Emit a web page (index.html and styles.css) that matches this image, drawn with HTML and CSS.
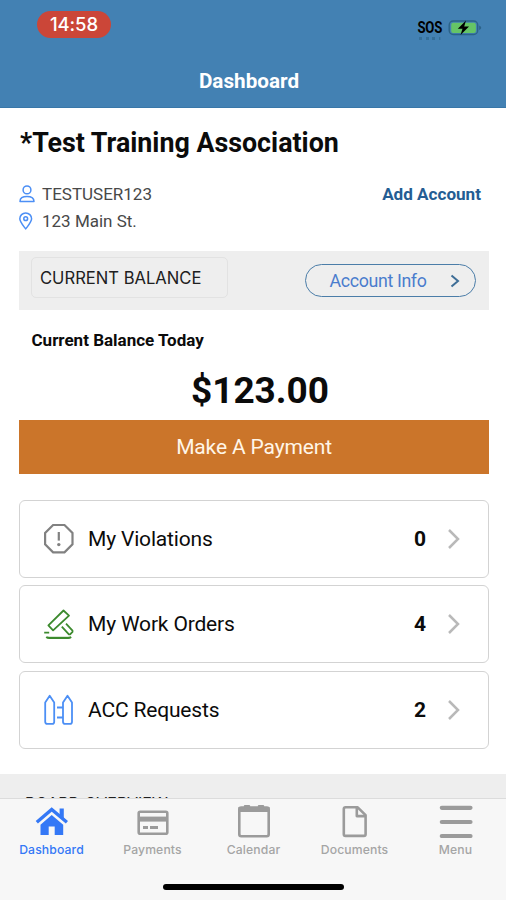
FILE: index.html
```html
<!DOCTYPE html>
<html lang="en">
<head>
<meta charset="utf-8">
<title>Dashboard</title>
<link rel="stylesheet" href="styles.css">
</head>
<body>
<div class="app">
  <header class="header">
    <div class="status">
      <span class="time">14:58</span>
      <div class="signals">
        <div class="sos"><span>SOS</span><i class="dots"></i></div>
        <svg class="battery" width="34" height="18" viewBox="0 0 34 18">
          <rect x="1.2" y="2" width="28.5" height="13.5" rx="4" fill="none" stroke="#2b6288" stroke-width="1.4"/>
          <rect x="3.2" y="3.7" width="24.7" height="10.2" rx="2" fill="#65c466"/>
          <path d="M31.2 6.5q2 .8 2 2.3t-2 2.3z" fill="#2b6288"/>
          <path d="M18 1.5 9.8 9.7h4.7l-2 6.3 8.5-8.4h-4.8z" fill="#000"/>
        </svg>
      </div>
    </div>
    <h1 class="screen-title">Dashboard</h1>
  </header>

  <main class="content">
    <h2 class="association">*Test Training Association</h2>
    <div class="account">
      <div class="details">
        <div class="detail">
          <svg width="16" height="18" viewBox="0 0 16 18" fill="none" stroke="#4c8ff5" stroke-width="1.5"><circle cx="8" cy="4.9" r="3.9"/><path d="M1 16.4c0-3.3 2.4-5 7-5s7 1.7 7 5z" stroke-linejoin="round"/></svg>
          <span class="user">TESTUSER123</span>
        </div>
        <div class="detail">
          <svg width="16" height="18" viewBox="0 0 16 18" fill="none" stroke="#4c8ff5" stroke-width="1.5"><path d="M6.7 16.9C3.4 12.6.8 9.8.8 6.8a5.9 5.9 0 0 1 11.8 0c0 3-2.6 5.8-5.9 10.1z" stroke-linejoin="round"/><circle cx="6.7" cy="6.7" r="1.9"/></svg>
          <span class="street">123 Main St.</span>
        </div>
      </div>
      <a class="add">Add Account</a>
    </div>

    <section class="balance-bar">
      <span class="balance-tag">CURRENT BALANCE</span>
      <button class="info"><span>Account Info</span><svg width="10" height="14" viewBox="0 0 10 14" fill="none" stroke="#3d6d96" stroke-width="2"><path d="M1.5 1.5 8 7l-6.5 5.5"/></svg></button>
    </section>
    <div class="today">Current Balance Today</div>
    <div class="amount">$123.00</div>
    <button class="pay">Make A Payment</button>

    <div class="cards">
      <div class="card">
        <svg width="32" height="32" viewBox="0 0 32 32" fill="none" stroke="#818181" stroke-width="2.2"><path d="M10.1 2h11.4l8 8v11.4l-8 8H10.100l-8-8V10z"/><path d="M15.800 9v8.600"/><circle cx="15.800" cy="21.600" r="1.700" fill="#818181" stroke="none"/></svg>
        <span class="label">My Violations</span><b class="count">0</b>
        <svg class="go" width="14" height="22" viewBox="0 0 14 22"><path d="M2 2l9 9-9 9"/></svg>
      </div>
      <div class="card">
        <svg width="32" height="32" viewBox="0 0 32 32" fill="none" stroke="#3c8a2e" stroke-width="1.8" stroke-linejoin="round"><path d="M20.5 2.5 5.4 17.4l4.700 4.900L26 7.600z"/><path d="M18.800 18.600l7.100 7.800h1.200l2.400-2.500v-1.300l-6.500-6.900"/><path d="M1.200 24.700h5M3.200 29q1.200 1 3 1h19q1.800 0 3-1"/><path d="M4 29.300h23.500" stroke-width="1"/></svg>
        <span class="label">My Work Orders</span><b class="count">4</b>
        <svg class="go" width="14" height="22" viewBox="0 0 14 22"><path d="M2 2l9 9-9 9"/></svg>
      </div>
      <div class="card">
        <svg width="32" height="32" viewBox="0 0 32 32" fill="none" stroke="#4c8ff5" stroke-width="1.8" stroke-linejoin="round"><path d="M6.700 1.800 2.200 8.500v19.200q0 2.200 2.200 2.200h4.800q2 0 2-2.200V8.500zM24.500 1.800 20 8.500v19.200q0 2.200 2.200 2.200H27q2 0 2-2.200V8.500zM14 13.500h6M14 23.500h6"/></svg>
        <span class="label">ACC Requests</span><b class="count">2</b>
        <svg class="go" width="14" height="22" viewBox="0 0 14 22"><path d="M2 2l9 9-9 9"/></svg>
      </div>
    </div>
    <section class="board">BOARD OVERVIEW</section>
  </main>

  <footer class="tabbar">
    <nav class="tabs">
      <a class="tab active">
        <svg width="34" height="36" viewBox="0 0 34 36" fill="#3478f6"><path d="M1.800 20.300 16.700 7.500l15.200 12.800" fill="none" stroke="#3478f6" stroke-width="3.400"/><path d="M24.600 6.400h4.200v11.800l-4.200-3.800zM16.700 13.100l11.500 9.700v10.300h-8.500v-8.500h-6v8.500H5.500V22.800z"/></svg>
        <span>Dashboard</span>
      </a>
      <a class="tab">
        <svg width="34" height="36" viewBox="0 0 34 36" fill="none" stroke="#9b9b9b"><rect x="2.700" y="9.700" width="28.600" height="22" rx="1.500" stroke-width="2.600"/><path d="M2 17.100h30" stroke-width="5"/><path d="M7 25.500h5M14 25.500h8" stroke-width="3"/></svg>
        <span>Payments</span>
      </a>
      <a class="tab">
        <svg width="34" height="36" viewBox="0 0 34 36" fill="none" stroke="#9b9b9b"><rect x="2.300" y="5.500" width="29.400" height="28.700" rx="2" stroke-width="2.600"/><path d="M1.500 7.500h31" stroke-width="5"/><path d="M8 4.300h4M22 4.300h4" stroke-width="2.500" stroke-linecap="round"/></svg>
        <span>Calendar</span>
      </a>
      <a class="tab">
        <svg width="34" height="36" viewBox="0 0 34 36" fill="none" stroke="#9b9b9b" stroke-width="2.600" stroke-linejoin="round"><path d="M7.500 5.300h12.200l7.900 7.900v19q0 1.700-1.700 1.700H7.500q-1.700 0-1.700-1.700V7q0-1.700 1.700-1.700z"/><path d="M18.800 5.300v8.800h8.500"/></svg>
        <span>Documents</span>
      </a>
      <a class="tab">
        <svg width="34" height="36" viewBox="0 0 34 36" stroke="#9b9b9b" stroke-width="4.200" stroke-linecap="round"><path d="M2.800 5.800h28.700M2.800 20h28.700M2.800 34h28.700"/></svg>
        <span>Menu</span>
      </a>
    </nav>
    <div class="home-indicator"></div>
  </footer>
</div>
</body>
</html>
```
FILE: styles.css
```css
* { box-sizing: border-box; }
html, body { margin: 0; height: 100%; overflow: hidden; }
body { background: #fff; color: #0b0b0b; font-family: Roboto, "Liberation Sans", sans-serif; }
button { font: inherit; padding: 0; border: 0; }
svg { display: block; flex: none; }
.app { width: 506px; height: 900px; display: flex; flex-direction: column; }

.header { height: 108px; flex: none; background: #4381b3; color: #fff; border-bottom: 1px solid #3977a8; }
.status { height: 54px; display: flex; justify-content: space-between; padding: 11px 24px 0 37px; }
.time { width: 74px; height: 27px; border-radius: 14px; background: #cb4638; text-align: center; font: 500 18.5px/27px Inter, sans-serif; letter-spacing: -.1px; }
.signals { display: flex; gap: 6px; padding-top: 8px; color: #000; }
.sos { font-size: 16px; font-weight: 700; line-height: 17px; letter-spacing: -.2px; transform: scaleX(.82); transform-origin: right; }
.sos span { display: block; }
.dots { display: block; height: 3px; margin: 1px 2px 0; background: repeating-linear-gradient(90deg, #2b628899 0 4px, transparent 4px 8px); }
.screen-title { margin: 0; font-size: 20.7px; line-height: 55px; font-weight: 700; text-align: center; padding-right: 8px; }

.content { height: 690px; flex: none; overflow: hidden; }
.association { margin: 18px 0 0 20px; font-size: 26.8px; line-height: 35px; font-weight: 700; white-space: nowrap; }
.account { display: flex; justify-content: space-between; padding: 19px 25px 0 19px; }
.detail { display: flex; align-items: center; gap: 7px; height: 27px; font-size: 17px; color: #484848; }
.add { font-size: 17.1px; line-height: 29px; font-weight: 700; color: #245d93; }
.balance-bar { height: 59px; margin: 17px 17px 0 19px; padding: 6px 13px 0 12px; display: flex; justify-content: space-between; background: #eee; }
.balance-tag { width: 197px; height: 41px; padding-left: 8px; border: 1px solid #e2e2e2; border-radius: 5px; font: 16.6px/41px Inter, sans-serif; color: #202020; }
.info { width: 171px; height: 33px; margin-top: 7px; padding: 0 15px 0 23.5px; display: flex; align-items: center; justify-content: space-between; border: 1.5px solid #4b7da8; border-radius: 17px; background: none; color: #4a7ccd; font-size: 17.8px; letter-spacing: -.35px; }
.today { margin: 19px 0 0 31.5px; font-size: 17px; line-height: 22px; font-weight: 700; }
.amount { margin-top: 17px; padding-left: 14px; height: 52px; text-align: center; font-size: 37px; line-height: 46px; font-weight: 700; }
.pay { display: block; width: 470px; height: 54px; margin-left: 19px; background: #cb752a; color: #fff6e8; font-size: 21px; letter-spacing: -.15px; }
.cards { margin: 26px 17px 0 19px; }
.card { height: 78px; padding: 0 27px 0 23px; display: flex; align-items: center; border: 1.5px solid #d3d3d3; border-radius: 6px; }
.card:nth-child(2) { margin: 7px 0 8px; }
.label { flex: 1; margin-left: 13px; font-size: 21px; letter-spacing: -.17px; }
.count { margin-right: 21px; font-size: 21px; }
.go path { fill: none; stroke: #b9b9b9; stroke-width: 2.5; }
.board { height: 60px; margin-top: 25px; padding: 19px 0 0 25px; background: #eee; color: #202020; font: 16px/20px Inter, sans-serif; }

.tabbar { height: 102px; flex: none; border-top: 1px solid #dcdcdc; background: #f7f7f7; }
.tabs { height: 85px; display: grid; grid-template-columns: repeat(5, 101px); }
.tab { display: flex; flex-direction: column; align-items: center; padding: 3px 0 0 2px; color: #a5a5a5; font: 500 12.2px/20px Inter, sans-serif; letter-spacing: .12px; }
.tab span { margin-top: 2px; }
.active { color: #3478f6; }
.home-indicator { width: 181px; height: 6px; margin-left: 163px; border-radius: 3px; background: #000; }
```
